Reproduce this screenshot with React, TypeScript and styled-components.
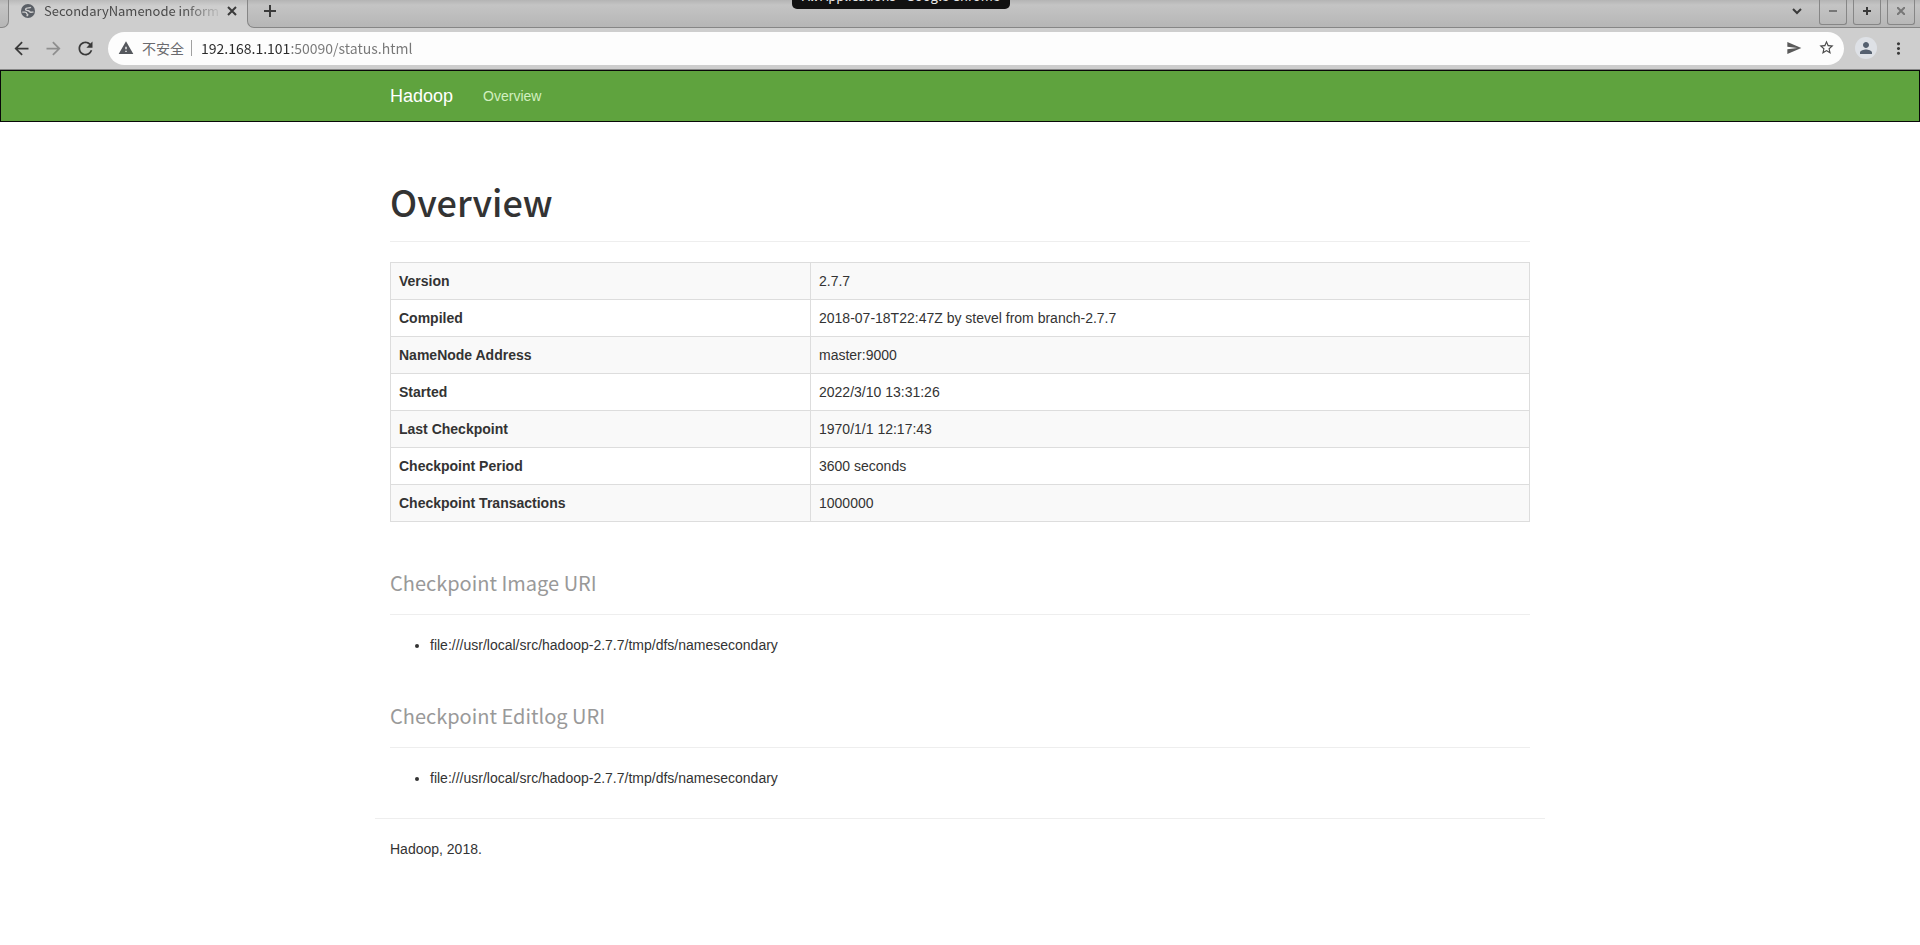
import React from "react";
import styled, { createGlobalStyle } from "styled-components";

const GlobalStyle = createGlobalStyle`
  *, *::before, *::after { box-sizing: border-box; }
  body {
    margin: 0;
    background: #fff;
    color: #333;
    font: 14px/20px "Liberation Sans", Arial, sans-serif;
  }
`;

const uiFont = `"Noto Sans CJK SC", sans-serif`;
const stripGradient = "linear-gradient(#b4b4b4, #c4c4c4 5px, #b6b6b6 27px)";

/* ---------- browser chrome ---------- */

const Chrome = styled.header`
  position: relative;
  background: #cecece;
  border-bottom: 1px solid #868686;
  font-family: ${uiFont};
`;

const TabStrip = styled.div`
  display: flex;
  height: 28px;
  background: linear-gradient(#bababa, #cecece 6px);
`;

const StripStart = styled.div`
  width: 9px;
  background: ${stripGradient};
  border: solid #868686;
  border-width: 0 1px 1px 0;
  border-bottom-right-radius: 7px;
`;

const Tab = styled.div`
  display: flex;
  align-items: center;
  width: 238px;
  padding: 0 8px 6px 12px;
`;

const TabTitle = styled.span`
  flex: 1;
  margin-left: 9px;
  overflow: hidden;
  white-space: nowrap;
  font-size: 13px;
  line-height: 20px;
  color: #4a4a4a;
  mask-image: linear-gradient(90deg, #000 calc(100% - 42px), transparent calc(100% - 2px));
`;

const IconButton = styled.button<{ $w?: number; $color?: string }>`
  display: flex;
  flex: none;
  align-items: center;
  justify-content: center;
  width: ${(p) => p.$w ?? 32}px;
  padding: 0;
  border: 0;
  background: none;
  color: ${(p) => p.$color ?? "#3a3a3a"};
`;

const StripRest = styled.div`
  display: flex;
  flex: 1;
  align-items: flex-start;
  background: ${stripGradient};
  border: solid #868686;
  border-width: 0 0 1px 1px;
  border-bottom-left-radius: 7px;

  > ${IconButton} { height: 22px; }
`;

const StripTools = styled.div`
  display: flex;
  gap: 6px;
  margin-left: auto;
  padding-right: 5px;
`;

const WindowButton = styled(IconButton)`
  width: 28px;
  height: 25px;
  padding-bottom: 3px;
  border: solid #868686;
  border-width: 0 1px 1px;
  border-radius: 0 0 3px 3px;
`;

const SearchTabs = styled(IconButton)`
  height: 22px;
`;

const Toolbar = styled.div`
  display: flex;
  align-items: center;
  height: 41px;
  padding: 0 6px 0 5px;

  > ${IconButton} { padding-bottom: 1px; }
`;

const AddressBar = styled.div`
  display: flex;
  flex: 1;
  align-items: center;
  height: 33px;
  margin: 0 6px 0 7px;
  padding: 0 2px 2px 10px;
  border-radius: 17px;
  background: #fdfdfd;
`;

const Security = styled.span`
  margin-left: 8px;
  padding-right: 7px;
  border-right: 1px solid #a0a0a0;
  font-size: 14px;
  line-height: 16px;
  color: #6a6a6e;
  white-space: nowrap;
`;

const AddressInput = styled.input`
  flex: 1;
  min-width: 0;
  height: 24px;
  margin-left: 9px;
  padding: 0;
  border: 0;
  outline: 0;
  font: 14px/24px ${uiFont};
  color: #777;
  background: linear-gradient(90deg, #2a2a2a 90px, #777 90px);
  background-clip: text;
  -webkit-text-fill-color: transparent;
`;

const Avatar = styled.span`
  display: flex;
  align-items: center;
  justify-content: center;
  width: 22px;
  height: 22px;
  border-radius: 50%;
  background: #dee1e6;
  color: #55606f;
`;

const WindowHint = styled.div`
  position: absolute;
  top: -17px;
  left: 50%;
  width: 218px;
  height: 26px;
  margin-left: -168px;
  border-radius: 5px;
  background: #111;
  color: #e8e8e8;
  font-size: 13px;
  line-height: 26px;
  text-align: center;
  white-space: nowrap;
`;

/* ---------- page ---------- */

const Container = styled.div`
  max-width: 1170px;
  margin: 0 auto;
  padding: 0 15px;
`;

const Navbar = styled.nav`
  border: 1px solid #080808;
  background: #5fa33e;
`;

const NavRow = styled(Container)`
  display: flex;
  gap: 30px;
  padding: 15px;
`;

const Brand = styled.a`
  font-size: 18px;
  line-height: 20px;
  color: #fff;
  text-decoration: none;
`;

const NavLink = styled.a`
  color: #d2f0c0;
  text-decoration: none;
`;

const Title = styled.h1`
  margin: 59px 0 20px;
  padding-bottom: 20px;
  border-bottom: 1px solid #eee;
  font: 500 36px/40px ${uiFont};
`;

const SectionTitle = styled.h2`
  margin: 50px 0 20px;
  padding-bottom: 20px;
  border-bottom: 1px solid #eee;
  font: 400 20px/22px ${uiFont};
  color: #999;
`;

const InfoTable = styled.table`
  width: 100%;
  border-collapse: collapse;
  table-layout: fixed;

  th, td {
    padding: 8px;
    border: 1px solid #ddd;
    text-align: left;
  }
  th { width: 420px; }
  tr:nth-child(odd) { background: #f9f9f9; }
`;

const UriList = styled.ul`
  margin: 0;
  padding-left: 40px;
`;

const Footer = styled.footer`
  margin: 30px -15px 0;
  padding: 20px 15px;
  border-top: 1px solid #eee;
`;

const Globe = () => (
  <svg width="14" height="14" viewBox="0 0 14 14" aria-hidden="true">
    <circle cx="7" cy="7" r="7" fill="#5a5f66" />
    <path
      d="M9.800 3.100c-.6 1-1.300.8-2.400.8-1.600 0-2.800.5-2.800 1.600 0 1.300 1.400 1.100 2.600 1.200 1.200.1 1.300 1.400 2.400 1.500.9.1 1.900 0 2.900-.4M1.300 8.100h2.400c1.300 0 2 .5 2 1.400 0 .8 1.100.4 1.100 1.200 0 .6-.6.9-1.200 1.300"
      fill="none"
      stroke="#cecece"
      strokeWidth="1.400"
    />
  </svg>
);

const Stroke = ({ d, size = 16, width = 2 }: { d: string; size?: number; width?: number }) => (
  <svg width={size} height={size} viewBox={`0 0 ${size} ${size}`} fill="none" stroke="currentColor" strokeWidth={width} aria-hidden="true">
    <path d={d} />
  </svg>
);

const Solid = ({ d, size }: { d: string; size: number }) => (
  <svg width={size} height={size} viewBox="0 0 24 24" fill="currentColor" aria-hidden="true">
    <path d={d} />
  </svg>
);

const facts: [string, string][] = [
  ["Version", "2.7.7"],
  ["Compiled", "2018-07-18T22:47Z by stevel from branch-2.7.7"],
  ["NameNode Address", "master:9000"],
  ["Started", "2022/3/10 13:31:26"],
  ["Last Checkpoint", "1970/1/1 12:17:43"],
  ["Checkpoint Period", "3600 seconds"],
  ["Checkpoint Transactions", "1000000"],
];

const uriSections = [
  { title: "Checkpoint Image URI", uris: ["file:///usr/local/src/hadoop-2.7.7/tmp/dfs/namesecondary"] },
  { title: "Checkpoint Editlog URI", uris: ["file:///usr/local/src/hadoop-2.7.7/tmp/dfs/namesecondary"] },
];

const BrowserChrome = () => (
  <Chrome>
    <TabStrip>
      <StripStart />
      <Tab>
        <Globe />
        <TabTitle>SecondaryNamenode inform</TabTitle>
        <IconButton $w={14} aria-label="Close tab">
          <Stroke size={10} d="M1 1l8 8M9 1l-8 8" />
        </IconButton>
      </Tab>
      <StripRest>
        <IconButton $w={44} aria-label="New tab">
          <Stroke size={12} d="M6 0v12M0 6h12" />
        </IconButton>
        <StripTools>
          <SearchTabs aria-label="Search tabs">
            <Stroke size={10} d="M1 3l4 4l4-4" />
          </SearchTabs>
          <WindowButton aria-label="Minimize" $color="#777">
            <Stroke size={8} d="M0 4h8" />
          </WindowButton>
          <WindowButton aria-label="Maximize">
            <Stroke size={8} d="M4 0v8M0 4h8" />
          </WindowButton>
          <WindowButton aria-label="Close" $color="#777">
            <Stroke size={8} d="M0 0l8 8M8 0l-8 8" />
          </WindowButton>
        </StripTools>
      </StripRest>
    </TabStrip>
    <Toolbar>
      <IconButton aria-label="Back">
        <Solid size={21} d="M20 11H7.830l5.590-5.590L12 4l-8 8 8 8 1.410-1.410L7.830 13H20v-2z" />
      </IconButton>
      <IconButton aria-label="Forward" $color="#8e8e8e">
        <Solid size={21} d="M12 4l-1.410 1.410L16.170 11H4v2h12.170l-5.580 5.590L12 20l8-8z" />
      </IconButton>
      <IconButton aria-label="Reload">
        <Solid size={21} d="M17.650 6.350C16.200 4.900 14.210 4 12 4c-4.420 0-7.990 3.580-7.990 8s3.570 8 7.990 8c3.730 0 6.840-2.550 7.730-6h-2.080c-.820 2.330-3.040 4-5.650 4-3.310 0-6-2.690-6-6s2.690-6 6-6c1.660 0 3.140.690 4.220 1.780L13 11h7V4l-2.350 2.350z" />
      </IconButton>
      <AddressBar>
        <IconButton $w={16} $color="#55585d" aria-label="Site information">
          <Solid size={16} d="M1 21h22L12 2 1 21zm12-3h-2v-2h2v2zm0-4h-2v-4h2v4z" />
        </IconButton>
        <Security>不安全</Security>
        <AddressInput aria-label="Address" defaultValue="192.168.1.101:50090/status.html" />
        <IconButton $color="#5a5a5a" aria-label="Send">
          <Solid size={16} d="M2.010 21L23 12 2.010 3 2 10l15 2-15 2z" />
        </IconButton>
        <IconButton $color="#4a4a4a" aria-label="Bookmark">
          <Solid size={17} d="M22 9.240l-7.190-.620L12 2 9.190 8.630 2 9.240l5.460 4.730L5.820 21 12 17.270 18.180 21l-1.630-7.030L22 9.240zM12 15.400l-3.760 2.270 1-4.280-3.320-2.880 4.380-.380L12 6.100l1.710 4.040 4.380.380-3.320 2.880 1 4.280L12 15.400z" />
        </IconButton>
      </AddressBar>
      <IconButton aria-label="Profile">
        <Avatar>
          <Solid size={18} d="M12 12c2.210 0 4-1.790 4-4s-1.790-4-4-4-4 1.790-4 4 1.790 4 4 4zm0 2c-2.670 0-8 1.340-8 4v2h16v-2c0-2.660-5.330-4-8-4z" />
        </Avatar>
      </IconButton>
      <IconButton aria-label="Menu">
        <Solid size={19} d="M12 8c1.100 0 2-.9 2-2s-.9-2-2-2-2 .9-2 2 .9 2 2 2zm0 2c-1.100 0-2 .9-2 2s.9 2 2 2 2-.9 2-2-.9-2-2-2zm0 6c-1.100 0-2 .9-2 2s.9 2 2 2 2-.9 2-2-.9-2-2-2z" />
      </IconButton>
    </Toolbar>
    <WindowHint>All Applications - Google Chrome</WindowHint>
  </Chrome>
);

export default function App() {
  return (
    <>
      <GlobalStyle />
      <BrowserChrome />
      <Navbar>
        <NavRow>
          <Brand href="#">Hadoop</Brand>
          <NavLink href="#overview">Overview</NavLink>
        </NavRow>
      </Navbar>
      <Container as="main">
        <Title id="overview">Overview</Title>
        <InfoTable>
          <tbody>
            {facts.map(([name, value]) => (
              <tr key={name}>
                <th scope="row">{name}</th>
                <td>{value}</td>
              </tr>
            ))}
          </tbody>
        </InfoTable>
        {uriSections.map((s) => (
          <section key={s.title}>
            <SectionTitle>{s.title}</SectionTitle>
            <UriList>
              {s.uris.map((u) => (
                <li key={u}>{u}</li>
              ))}
            </UriList>
          </section>
        ))}
        <Footer>Hadoop, 2018.</Footer>
      </Container>
    </>
  );
}
